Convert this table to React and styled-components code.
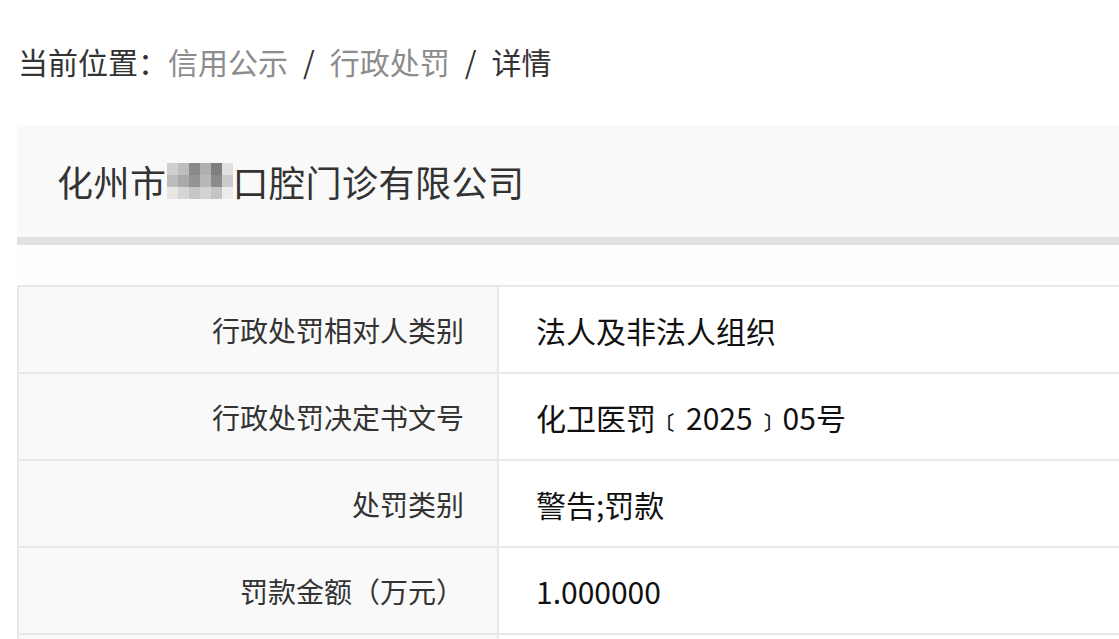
import React from 'react';
import styled, { createGlobalStyle } from 'styled-components';

const GlobalStyle = createGlobalStyle`
  html, body {
    margin: 0;
    padding: 0;
    background: #fff;
    overflow: hidden;
  }
  body {
    font-family: "Noto Sans CJK SC", "Noto Sans", sans-serif;
  }
`;

const Page = styled.div`
  width: 1400px;
  padding-left: 17px;
`;

const Crumbs = styled.div`
  height: 40px;
  line-height: 40px;
  margin: 41px 0 44px 1px;
  font-size: 30px;
  color: #333;
  white-space: nowrap;
`;

const CrumbLink = styled.span`
  color: #8c8c8c;
`;

const Sep = styled.span`
  color: #333;
  padding: 0 15px;
`;

const TitleBox = styled.div`
  height: 112px;
  background: #f9f9f9;
  border-bottom: 8px solid #e1e1e1;
  display: flex;
  align-items: center;
  padding-left: 40px;
  font-size: 36px;
  letter-spacing: 0.5px;
  color: #333;
  white-space: nowrap;
`;

const Mosaic = styled.span`
  display: inline-grid;
  grid-template-columns: repeat(6, 11px);
  grid-auto-rows: 12px;
  vertical-align: middle;
`;

const Cell = styled.span`
  background: ${p => p.$c};
`;

const Gap = styled.div`
  height: 40px;
  background: #fefefe;
`;

const Table = styled.div`
  border-top: 2px solid #e8e8e8;
  border-left: 2px solid #e8e8e8;
`;

const Row = styled.div`
  display: grid;
  grid-template-columns: 480px 1fr;
  height: 85px;
  border-bottom: 2px solid #e8e8e8;
`;

const Label = styled.div`
  background: #f9f9f9;
  border-right: 2px solid #e8e8e8;
  display: flex;
  align-items: center;
  justify-content: flex-end;
  padding-right: 33px;
  font-size: 28px;
  color: #333;
`;

const Value = styled.div`
  display: flex;
  align-items: center;
  padding-left: 37px;
  font-size: 30px;
  color: #111;
`;

const mosaicColors = [
  '#cfcfcf', '#bdbdbd', '#8a8a8a', '#b0b0b0', '#7f7f7f', '#e0e0e0',
  '#bcbcbc', '#a9a9a9', '#949494', '#b8b8b8', '#8b8b8b', '#cbcbcb',
  '#e6e6e6', '#d6d6d6', '#c6c6c6', '#d3d3d3', '#c4c4c4', '#ececec',
];

const rows = [
  ['行政处罚相对人类别', '法人及非法人组织'],
  ['行政处罚决定书文号', '化卫医罚﹝2025﹞05号'],
  ['处罚类别', '警告;罚款'],
  ['罚款金额（万元）', '1.000000'],
  ['', ''],
];

export default function App() {
  return (
    <Page>
      <GlobalStyle />
      <Crumbs>
        当前位置：<CrumbLink>信用公示</CrumbLink>
        <Sep>/</Sep>
        <CrumbLink>行政处罚</CrumbLink>
        <Sep>/</Sep>
        详情
      </Crumbs>
      <TitleBox>
        化州市
        <Mosaic>
          {mosaicColors.map((c, i) => (
            <Cell key={i} $c={c} />
          ))}
        </Mosaic>
        口腔门诊有限公司
      </TitleBox>
      <Gap />
      <Table>
        {rows.map(([k, v], i) => (
          <Row key={i}>
            <Label>{k}</Label>
            <Value>{v}</Value>
          </Row>
        ))}
      </Table>
    </Page>
  );
}
